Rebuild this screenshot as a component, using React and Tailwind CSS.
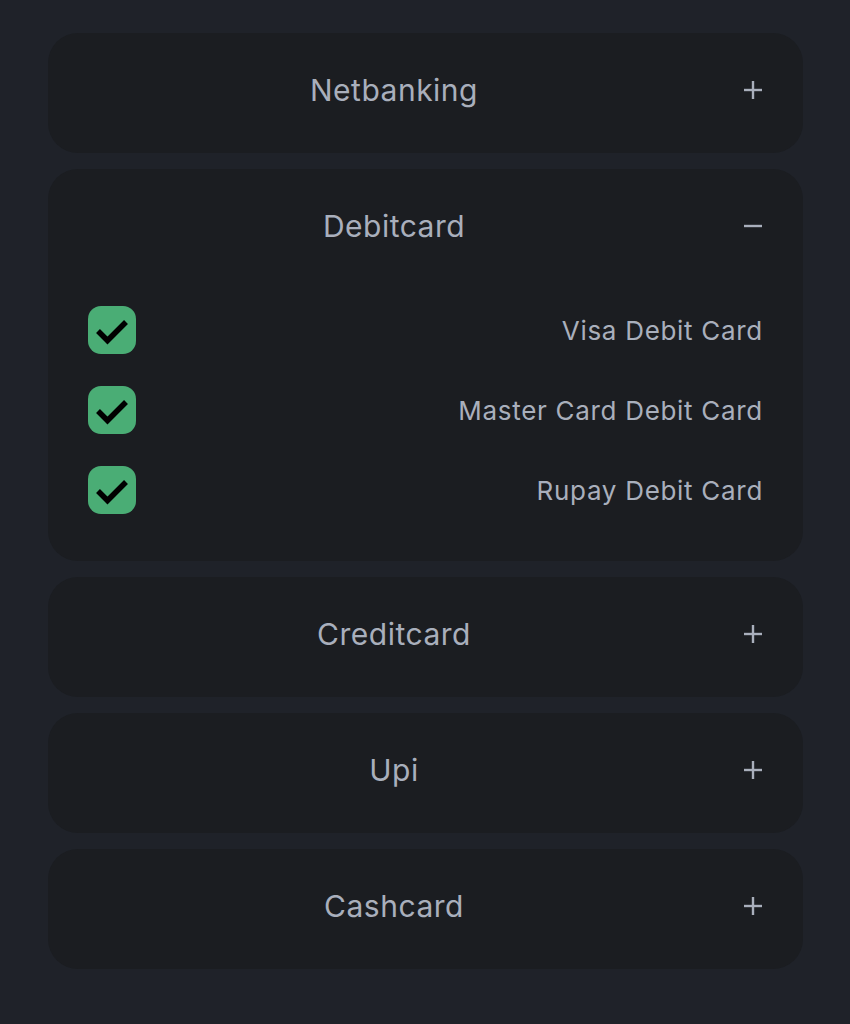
import React, { useState } from 'react';

const methods = [
  { name: 'Netbanking', items: [] },
  { name: 'Debitcard', items: ['Visa Debit Card', 'Master Card Debit Card', 'Rupay Debit Card'] },
  { name: 'Creditcard', items: [] },
  { name: 'Upi', items: [] },
  { name: 'Cashcard', items: [] },
];

const Toggle = ({ open }) => (
  <svg width="20" height="20" viewBox="0 0 20 20" className="text-[#a9afbc]">
    <path d="M1 10h18" stroke="currentColor" strokeWidth="2.4" />
    {!open && <path d="M10 1v18" stroke="currentColor" strokeWidth="2.4" />}
  </svg>
);

const Check = () => (
  <div className="w-12 h-12 rounded-[13px] bg-[#4aad75] flex items-center justify-center shrink-0">
    <svg width="48" height="48" viewBox="0 0 48 48">
      <path d="M10 25l9.5 9.5L38 16" fill="none" stroke="#000" strokeWidth="5.5" strokeLinejoin="miter" />
    </svg>
  </div>
);

const Section = ({ method, open, onToggle }) => (
  <div className="bg-[#1b1d21] rounded-[30px] px-10 pb-1.5">
    <button onClick={onToggle} className="w-full h-[114px] flex items-center">
      <span className="flex-1 text-center text-[30px] text-[#a9afbc] tracking-[0.5px]">{method.name}</span>
      <span className="w-[63px] flex justify-end">
        <Toggle open={open} />
      </span>
    </button>
    {open && (
      <div className="flex flex-col gap-8 pt-[23px] pb-[41px]">
        {method.items.map((item) => (
          <label key={item} className="flex items-center justify-between">
            <Check />
            <span className="text-[26px] text-[#a9afbc] tracking-[0.7px]">{item}</span>
          </label>
        ))}
      </div>
    )}
  </div>
);

export default function App() {
  const [open, setOpen] = useState('Debitcard');
  return (
    <div
      className="min-h-screen bg-[#1f2229] pt-[33px] pl-12 pr-[47px] pb-12"
      style={{ fontFamily: 'Inter, "Noto Sans", sans-serif' }}
    >
      <div className="flex flex-col gap-4">
        {methods.map((m) => (
          <Section
            key={m.name}
            method={m}
            open={open === m.name}
            onToggle={() => setOpen(open === m.name ? null : m.name)}
          />
        ))}
      </div>
    </div>
  );
}
